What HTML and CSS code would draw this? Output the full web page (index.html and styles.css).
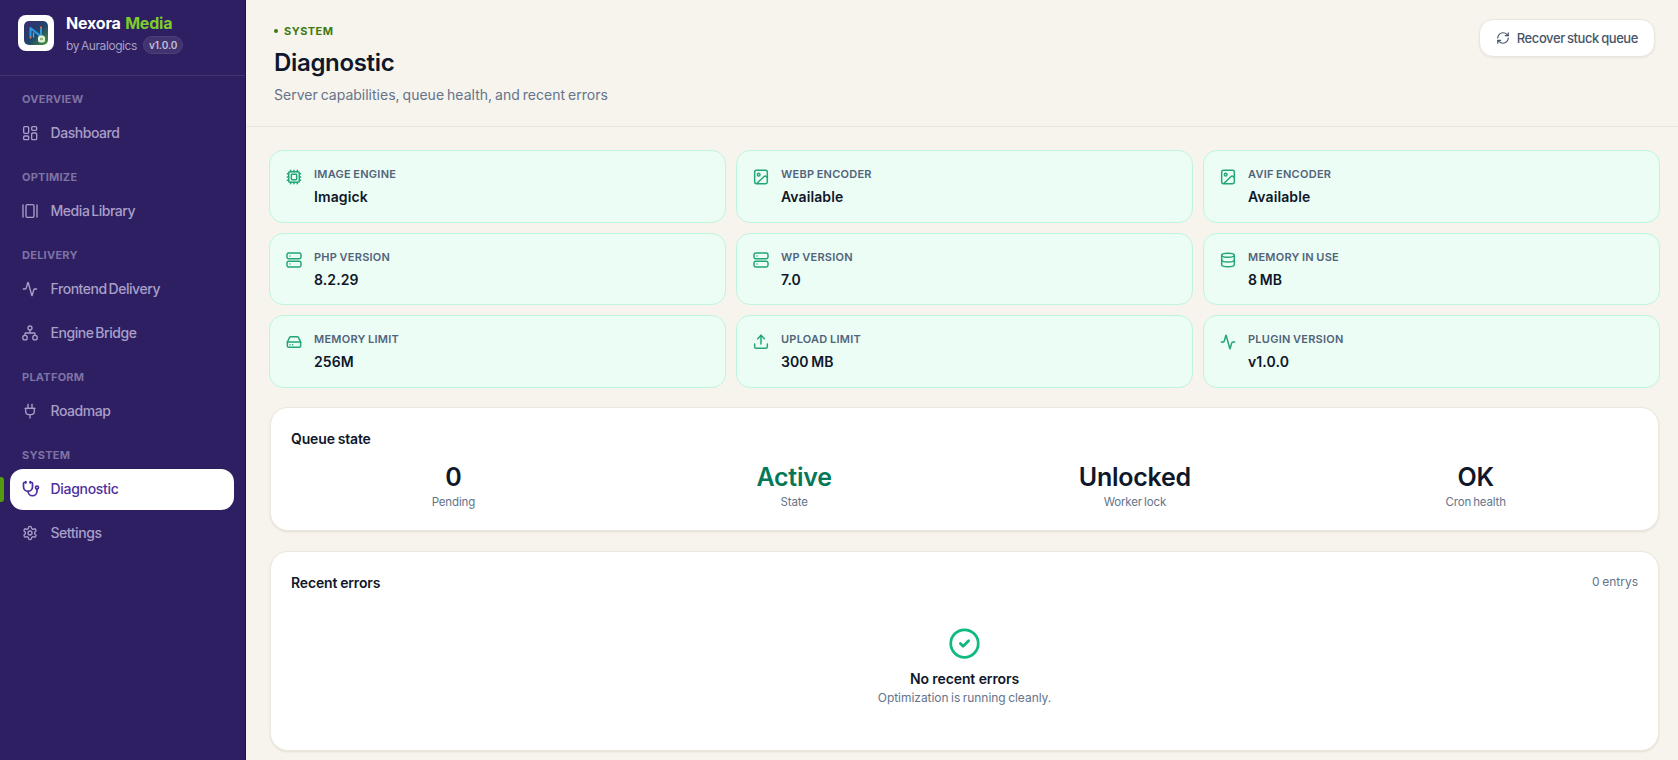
FILE: index.html
```
<!DOCTYPE html>
<html lang="en">
  <head>
    <meta charset="UTF-8" />
    <title>Diagnostic - Nexora Media</title>
    <link rel="stylesheet" href="styles.css">
  </head>
  <body>
    <aside class="sidebar">
      <div class="brand">
        <div class="brand-logo">
          <svg width="24" height="24" viewBox="0 0 24 24">
            <defs>
              <linearGradient id="logoBg" x1="0" y1="0" x2="1" y2="1">
                <stop offset="0" stop-color="#3a2a72" />
                <stop offset="0.55" stop-color="#20466a" />
                <stop offset="1" stop-color="#4f9a35" />
              </linearGradient>
            </defs>
            <rect width="24" height="24" rx="5" fill="url(#logoBg)" />
            <path d="M6.500 15V7l10.500 8.500V8" fill="none" stroke="#2c9be0" stroke-width="2" />
            <path d="M9.500 16v-4" fill="none" stroke="#35b6e0" stroke-width="1.4" />
            <circle cx="6.500" cy="16.500" r="1.100" fill="#e87a35" />
            <circle cx="17" cy="6.600" r="1.100" fill="#e87a35" />
            <rect x="14" y="14.500" width="7" height="7" rx="2.500" fill="#e4f2dc" />
            <rect x="16" y="16.700" width="3" height="2.600" rx="0.8" fill="#8dbb80" />
          </svg>
        </div>
        <div class="brand-text">
          <div class="brand-name">Nexora <span>Media</span></div>
          <div class="brand-meta"><span class="brand-by">by Auralogics</span><span class="version">v1.0.0</span></div>
        </div>
      </div>

      <nav class="nav">
        <div class="nav-label">OVERVIEW</div>
        <a class="nav-item">
          <svg class="icon" viewBox="0 0 24 24"><rect x="2.500" y="2.500" width="7.500" height="10" rx="1.500" /><rect x="14.500" y="2.500" width="7.500" height="5.500" rx="1.500" /><rect x="14.500" y="12" width="7.500" height="10" rx="1.500" /><rect x="2.500" y="16.500" width="7.500" height="5.500" rx="1.500" /></svg>
          <span>Dashboard</span>
        </a>

        <div class="nav-label">OPTIMIZE</div>
        <a class="nav-item">
          <svg class="icon" viewBox="0 0 24 24"><path d="M1.500 3v18" /><rect x="6" y="2.500" width="12" height="19" rx="2" /><path d="M22.500 3v18" /></svg>
          <span>Media Library</span>
        </a>

        <div class="nav-label">DELIVERY</div>
        <a class="nav-item">
          <svg class="icon" viewBox="0 0 24 24"><path d="M22 12h-2.48a2 2 0 0 0-1.93 1.46l-2.35 8.36a.25.25 0 0 1-.48 0L9.24 2.18a.25.25 0 0 0-.48 0l-2.35 8.36A2 2 0 0 1 4.49 12H2" /></svg>
          <span>Frontend Delivery</span>
        </a>
        <a class="nav-item">
          <svg class="icon" viewBox="0 0 24 24"><circle cx="12" cy="4.500" r="3" /><circle cx="4.500" cy="19" r="3.400" /><circle cx="19.500" cy="19" r="3.400" /><path d="M12 7.500V12M4.500 15.500V13a1 1 0 0 1 1-1h13a1 1 0 0 1 1 1v2.500" /></svg>
          <span>Engine Bridge</span>
        </a>

        <div class="nav-label">PLATFORM</div>
        <a class="nav-item">
          <svg class="icon" viewBox="0 0 24 24"><path d="M12 22.500v-5" /><path d="M9 8V2" /><path d="M15 8V2" /><path d="M18.500 8v4.500a5 5 0 0 1-5 5h-3a5 5 0 0 1-5-5V8Z" /><path d="M4.500 8h15" /></svg>
          <span>Roadmap</span>
        </a>

        <div class="nav-label">SYSTEM</div>
        <a class="nav-item active">
          <svg class="icon" viewBox="0 0 24 24"><path d="M11 2v2" /><path d="M5 2v2" /><path d="M5 3H4a2 2 0 0 0-2 2v4a6 6 0 0 0 12 0V5a2 2 0 0 0-2-2h-1" /><path d="M8 15a6 6 0 0 0 12 0v-3" /><circle cx="20" cy="10" r="2" /></svg>
          <span>Diagnostic</span>
        </a>
        <a class="nav-item">
          <svg class="icon" viewBox="0 0 24 24"><path d="M12.220 2h-.44a2 2 0 0 0-2 2v.18a2 2 0 0 1-1 1.730l-.43.25a2 2 0 0 1-2 0l-.15-.08a2 2 0 0 0-2.730.73l-.22.38a2 2 0 0 0 .73 2.730l.15.1a2 2 0 0 1 1 1.720v.51a2 2 0 0 1-1 1.740l-.15.09a2 2 0 0 0-.73 2.730l.22.38a2 2 0 0 0 2.730.73l.15-.08a2 2 0 0 1 2 0l.43.25a2 2 0 0 1 1 1.730V20a2 2 0 0 0 2 2h.44a2 2 0 0 0 2-2v-.18a2 2 0 0 1 1-1.730l.43-.25a2 2 0 0 1 2 0l.15.08a2 2 0 0 0 2.730-.73l.22-.39a2 2 0 0 0-.73-2.730l-.15-.08a2 2 0 0 1-1-1.740v-.5a2 2 0 0 1 1-1.740l.15-.09a2 2 0 0 0 .73-2.730l-.22-.38a2 2 0 0 0-2.730-.73l-.15.08a2 2 0 0 1-2 0l-.43-.25a2 2 0 0 1-1-1.730V4a2 2 0 0 0-2-2z" /><circle cx="12" cy="12" r="3" /></svg>
          <span>Settings</span>
        </a>
      </nav>
    </aside>

    <main class="main">
      <header class="page-header">
        <div>
          <div class="eyebrow">SYSTEM</div>
          <h1>Diagnostic</h1>
          <p class="subtitle">Server capabilities, queue health, and recent errors</p>
        </div>
        <button class="recover-button">
          <svg viewBox="0 0 24 24"><path d="M3 12a9 9 0 0 1 9-9 9.750 9.750 0 0 1 6.740 2.740L21 8" /><path d="M21 3v5h-5" /><path d="M21 12a9 9 0 0 1-9 9 9.750 9.750 0 0 1-6.740-2.740L3 16" /><path d="M8 16H3v5" /></svg>
          <span>Recover stuck queue</span>
        </button>
      </header>

      <section class="checks">
        <div class="check">
          <svg class="icon" viewBox="0 0 24 24"><rect x="4" y="4" width="16" height="16" rx="2" /><rect x="8" y="8" width="8" height="8" rx="1" /><path d="M12 2v2M7 2v2M17 2v2M12 20v2M7 20v2M17 20v2M2 12h2M2 7h2M2 17h2M20 12h2M20 7h2M20 17h2" /></svg>
          <div><div class="check-label">IMAGE ENGINE</div><div class="check-value">Imagick</div></div>
        </div>
        <div class="check">
          <svg class="icon" viewBox="0 0 24 24"><rect x="2.500" y="2" width="19" height="20" rx="2.500" /><circle cx="8.500" cy="8.500" r="2" /><path d="m21 12.500-1.500-1.400a2 2 0 0 0-2.800 0L6 21.500" /></svg>
          <div><div class="check-label">WEBP ENCODER</div><div class="check-value">Available</div></div>
        </div>
        <div class="check">
          <svg class="icon" viewBox="0 0 24 24"><rect x="2.500" y="2" width="19" height="20" rx="2.500" /><circle cx="8.500" cy="8.500" r="2" /><path d="m21 12.500-1.500-1.400a2 2 0 0 0-2.800 0L6 21.500" /></svg>
          <div><div class="check-label">AVIF ENCODER</div><div class="check-value">Available</div></div>
        </div>
        <div class="check">
          <svg class="icon" viewBox="0 0 24 24"><rect x="1.500" y="1.500" width="21" height="8.500" rx="2.500" /><rect x="1.500" y="14" width="21" height="8.500" rx="2.500" /><path d="M6 6h.01M6 18h.01" /></svg>
          <div><div class="check-label">PHP VERSION</div><div class="check-value">8.2.29</div></div>
        </div>
        <div class="check">
          <svg class="icon" viewBox="0 0 24 24"><rect x="1.500" y="1.500" width="21" height="8.500" rx="2.500" /><rect x="1.500" y="14" width="21" height="8.500" rx="2.500" /><path d="M6 6h.01M6 18h.01" /></svg>
          <div><div class="check-label">WP VERSION</div><div class="check-value">7.0</div></div>
        </div>
        <div class="check">
          <svg class="icon" viewBox="0 0 24 24"><ellipse cx="12" cy="5" rx="9.500" ry="3" /><path d="M2.500 5v14c0 1.660 4.250 3 9.500 3s9.500-1.340 9.500-3V5" /><path d="M2.500 12c0 1.660 4.250 3 9.500 3s9.500-1.340 9.500-3" /></svg>
          <div><div class="check-label">MEMORY IN USE</div><div class="check-value">8 MB</div></div>
        </div>
        <div class="check">
          <svg class="icon" viewBox="0 0 24 24"><path d="M22 12H2" /><path d="M5.450 5.110 2 12v6a2 2 0 0 0 2 2h16a2 2 0 0 0 2-2v-6l-3.450-6.890A2 2 0 0 0 16.760 4H7.240a2 2 0 0 0-1.790 1.110z" /><path d="M6 16h.01M10 16h.01" /></svg>
          <div><div class="check-label">MEMORY LIMIT</div><div class="check-value">256M</div></div>
        </div>
        <div class="check">
          <svg class="icon" viewBox="0 0 24 24"><path d="M2.500 15v4.500a2 2 0 0 0 2 2h15a2 2 0 0 0 2-2V15" /><path d="m17 7-5-5-5 5" /><path d="M12 2v13" /></svg>
          <div><div class="check-label">UPLOAD LIMIT</div><div class="check-value">300 MB</div></div>
        </div>
        <div class="check">
          <svg class="icon" viewBox="0 0 24 24"><path d="M22 12h-2.480a2 2 0 0 0-1.930 1.460l-2.350 8.360a.25.25 0 0 1-.48 0L9.240 2.180a.25.25 0 0 0-.48 0l-2.350 8.360A2 2 0 0 1 4.490 12H2" /></svg>
          <div><div class="check-label">PLUGIN VERSION</div><div class="check-value">v1.0.0</div></div>
        </div>
      </section>

      <section class="panel queue">
        <h2>Queue state</h2>
        <div class="stats">
          <div class="stat"><div class="stat-value">0</div><div class="stat-label">Pending</div></div>
          <div class="stat"><div class="stat-value ok">Active</div><div class="stat-label">State</div></div>
          <div class="stat"><div class="stat-value">Unlocked</div><div class="stat-label">Worker lock</div></div>
          <div class="stat"><div class="stat-value">OK</div><div class="stat-label">Cron health</div></div>
        </div>
      </section>

      <section class="panel errors">
        <div class="panel-head">
          <h2>Recent errors</h2>
          <span class="count">0 entrys</span>
        </div>
        <div class="empty">
          <svg viewBox="0 0 24 24"><circle cx="12" cy="12" r="10" /><path d="m9 12 2 2 4-4" /></svg>
          <div class="empty-title">No recent errors</div>
          <div class="empty-text">Optimization is running cleanly.</div>
        </div>
      </section>
    </main>
  </body>
</html>
```

FILE: styles.css
```
* {
  box-sizing: border-box;
}
body {
  margin: 0;
  display: flex;
  height: 760px;
  overflow: hidden;
  font-family: Inter, "Liberation Sans", sans-serif;
  background-color: #f7f3ed;
  color: #0f172a;
}
svg {
  fill: none;
  stroke: currentColor;
  stroke-width: 2;
  stroke-linecap: round;
  stroke-linejoin: round;
  flex-shrink: 0;
}
h1, h2, p {
  margin: 0;
}

/* Sidebar */
.sidebar {
  width: 246px;
  flex-shrink: 0;
  background-color: #2e1f62;
  border-right: 1px solid #21124f;
}
.brand {
  display: flex;
  gap: 12px;
  height: 76px;
  padding: 15px 18px 0;
  border-bottom: 1px solid #433573;
}
.brand-logo {
  display: flex;
  align-items: center;
  justify-content: center;
  width: 36px;
  height: 36px;
  border-radius: 8px;
  background-color: #fff;
}
.brand-logo svg {
  stroke: none;
}
.brand-name {
  margin-top: -2px;
  font-size: 16px;
  line-height: 20px;
  font-weight: 700;
  letter-spacing: -0.2px;
  word-spacing: 1px;
  color: #fff;
}
.brand-name span {
  color: #7fcb2b;
}
.brand-meta {
  display: flex;
  align-items: center;
  gap: 6px;
  margin-top: 3px;
}
.brand-by {
  font-size: 12px;
  letter-spacing: -0.42px;
  word-spacing: -1px;
  color: #a79fc4;
}
.version {
  height: 18px;
  padding: 0 5px;
  border: 1px solid #4d407b;
  border-radius: 9px;
  background-color: #41336f;
  font-size: 10px;
  line-height: 16px;
  font-weight: 600;
  letter-spacing: -0.1px;
  color: #c3bdd6;
}
.nav-label {
  margin-top: 15px;
  padding: 0 22px 6px;
  font-size: 11px;
  line-height: 16px;
  font-weight: 700;
  letter-spacing: 0.25px;
  color: #7e73a4;
}
.nav-item {
  position: relative;
  display: flex;
  align-items: center;
  gap: 12.5px;
  height: 41px;
  margin: 0 11px 0 10px;
  padding: 0 12px 2px;
  border-radius: 13px;
  font-size: 14px;
  font-weight: 500;
  letter-spacing: -0.45px;
  word-spacing: -1.5px;
  color: #a89fc8;
}
.nav-item + .nav-item {
  margin-top: 3px;
}
.nav-item .icon {
  width: 16px;
  height: 16px;
}
.nav-item.active {
  background-color: #fff;
  letter-spacing: -0.3px;
  color: #4c2fa0;
}
.nav-item.active::before {
  content: "";
  position: absolute;
  left: -10px;
  top: 8px;
  width: 4px;
  height: 25px;
  border-radius: 0 3px 3px 0;
  background-color: #529b0b;
}
.nav-item.active .icon {
  width: 18px;
  height: 18px;
  margin-right: -2px;
  stroke-width: 2.3;
}

/* Page header */
.main {
  flex: 1;
  min-width: 0;
}
.page-header {
  display: flex;
  justify-content: space-between;
  align-items: flex-start;
  height: 127px;
  padding: 19px 23px 0 28px;
  border-bottom: 1px solid #ebe7dc;
}
.eyebrow {
  display: flex;
  align-items: center;
  gap: 6px;
  margin-top: 4px;
  font-size: 11px;
  line-height: 16px;
  font-weight: 700;
  letter-spacing: 0.45px;
  color: #3f7a10;
}
.eyebrow::before {
  content: "";
  width: 4px;
  height: 4px;
  border-radius: 50%;
  background-color: #3f7a10;
}
h1 {
  margin-top: 8px;
  font-size: 24px;
  line-height: 32px;
  font-weight: 600;
  letter-spacing: -0.33px;
}
.subtitle {
  margin-top: 6px;
  font-size: 14px;
  line-height: 20px;
  word-spacing: -0.9px;
  color: #64748b;
}
.recover-button {
  display: flex;
  align-items: center;
  gap: 7px;
  height: 38px;
  padding: 0 16px;
  border: 1px solid #ebe6dc;
  border-radius: 14px;
  background-color: #fff;
  box-shadow: 0 1px 2px rgba(80, 70, 30, 0.08);
  font-family: inherit;
  font-size: 13px;
  font-weight: 500;
  letter-spacing: -0.42px;
  word-spacing: -0.8px;
  color: #475569;
}
.recover-button svg {
  width: 14px;
  height: 14px;
}

/* Capability cards */
.checks {
  display: grid;
  grid-template-columns: repeat(3, 1fr);
  grid-template-rows: 73px 72px 73px;
  gap: 10px;
  padding: 23px 18px 0 23px;
}
.check {
  display: flex;
  gap: 12px;
  padding: 15px 16px 0;
  border: 1.5px solid #bff5dc;
  border-radius: 14px;
  background-color: #ebfdf5;
}
.check .icon {
  width: 16px;
  height: 16px;
  margin-top: 3px;
  color: #22a577;
  stroke-width: 2.2;
}
.check-label {
  font-size: 11px;
  line-height: 16px;
  font-weight: 600;
  letter-spacing: 0.25px;
  word-spacing: -0.6px;
  color: #52637a;
}
.check-value {
  margin-top: 4.5px;
  font-size: 14px;
  line-height: 20px;
  font-weight: 600;
  letter-spacing: 0.1px;
  word-spacing: -1px;
}

/* Panels */
.panel {
  margin: 0 19px 0 24px;
  padding: 0 20px;
  border: 1px solid #ece8de;
  border-radius: 18px;
  background-color: #fff;
  box-shadow: 0 1px 2px rgba(80, 80, 30, 0.12);
}
h2 {
  font-size: 14px;
  line-height: 20px;
  font-weight: 600;
  letter-spacing: -0.15px;
  word-spacing: -0.5px;
}
.queue {
  height: 124px;
  margin-top: 19px;
  padding-top: 20.5px;
}
.stats {
  display: grid;
  grid-template-columns: repeat(4, 1fr);
  gap: 16px;
  margin-top: 12px;
  text-align: center;
}
.stat-value {
  font-size: 25px;
  line-height: 32px;
  font-weight: 600;
  letter-spacing: -0.25px;
}
.stat-value.ok {
  color: #047857;
}
.stat-label {
  margin-top: 1px;
  font-size: 11.5px;
  line-height: 16px;
  letter-spacing: -0.15px;
  word-spacing: -1px;
  color: #64748b;
}
.errors {
  height: 200px;
  margin-top: 20px;
  padding-top: 20.5px;
}
.panel-head {
  display: flex;
  justify-content: space-between;
}
.count {
  font-size: 12px;
  line-height: 18px;
  word-spacing: -0.8px;
  color: #64748b;
}
.empty {
  display: flex;
  flex-direction: column;
  align-items: center;
  margin-top: 34px;
}
.empty svg {
  width: 33px;
  height: 33px;
  color: #10b981;
}
.empty-title {
  margin-top: 9px;
  font-size: 14px;
  line-height: 20px;
  font-weight: 600;
  letter-spacing: -0.1px;
}
.empty-text {
  font-size: 12px;
  line-height: 18px;
  letter-spacing: -0.04px;
  word-spacing: -0.8px;
  color: #64748b;
}
```
